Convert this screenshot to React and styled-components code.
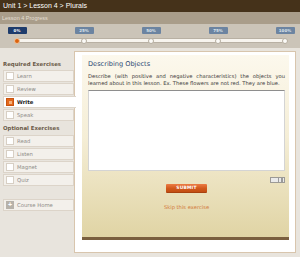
import React from 'react'
import styled, { createGlobalStyle } from 'styled-components'

const GlobalStyle = createGlobalStyle`
  html, body {
    margin: 0;
    padding: 0;
  }
  body {
    width: 300px;
    height: 257px;
    overflow: hidden;
    background: #e8e4dd;
    font-family: 'DejaVu Sans', Verdana, sans-serif;
  }
`

const Page = styled.div`
  display: flex;
  flex-direction: column;
  width: 300px;
  height: 257px;
`

const TopBar = styled.div`
  height: 12px;
  padding-left: 3px;
  background: #45321a;
  color: #fff;
  font: 7px/12px 'Liberation Sans', Arial, sans-serif;
`

const ProgressTitle = styled.div`
  height: 12px;
  padding-left: 2px;
  background: #a99d8a;
  color: #e4ddd1;
  font: 5.5px/12px 'Liberation Sans', Arial, sans-serif;
`

const ProgressArea = styled.div`
  height: 24px;
  box-sizing: border-box;
  padding: 3px 3px 0 5px;
  background: #cbc4b8;
`

const Stops = styled.div`
  display: flex;
  justify-content: space-between;
`

const Stop = styled.div`
  width: 24px;
  display: flex;
  justify-content: center;
`

const Badge = styled.span`
  width: 19px;
  height: 7px;
  border-radius: 1px;
  background: ${p => (p.$active ? '#1e3c6c' : '#6c84a1')};
  color: ${p => (p.$active ? '#fff' : '#dde4ec')};
  font: bold 4px/7px 'DejaVu Sans', Verdana, sans-serif;
  text-align: center;
`

const Track = styled.div`
  margin: 4px 12px 0;
  height: 3px;
  border: 1px solid #b8b0a3;
  border-radius: 3px;
  background: #f7f4ee;
  display: flex;
  justify-content: space-between;
  align-items: center;
`

const Dot = styled.span`
  width: 6px;
  height: 6px;
  box-sizing: border-box;
  border-radius: 50%;
  background: ${p => (p.$active ? '#db620e' : '#fbfaf7')};
  border: 1px solid ${p => (p.$active ? '#f0c49c' : '#b5ad9f')};
  &:first-child { margin-left: -4px; }
  &:last-child { margin-right: -4px; }
`

const Body = styled.div`
  flex: 1;
  min-height: 0;
  display: flex;
  padding: 3px 4px 4px 0;
`

const Sidebar = styled.nav`
  width: 74px;
  flex: none;
  box-sizing: border-box;
  padding: 7px 0 0 3px;
  display: flex;
  flex-direction: column;
`

const SectionTitle = styled.div`
  height: 12px;
  margin-bottom: ${p => (p.$gap ? '1px' : '0')};
  color: #6a5a47;
  font: bold 5.4px/12px 'DejaVu Sans', Verdana, sans-serif;
`

const Item = styled.div`
  position: relative;
  z-index: ${p => (p.$active ? 1 : 0)};
  height: 12px;
  box-sizing: border-box;
  margin: ${p => (p.$top ? '12px' : '0')} ${p => (p.$active ? '-2px' : '0')} 1px 0;
  padding-left: 2px;
  display: flex;
  align-items: center;
  gap: 3px;
  border: 1px solid #dcd4c9;
  border-right: ${p => (p.$active ? 'none' : '1px solid #dcd4c9')};
  background: ${p => (p.$active ? '#fff' : '#f3f0eb')};
  color: ${p => (p.$active ? '#222' : '#8e8b87')};
  font-size: 5.3px;
  font-weight: ${p => (p.$active ? 'bold' : 'normal')};
`

const Check = styled.span`
  width: 8px;
  height: 8px;
  box-sizing: border-box;
  flex: none;
  display: flex;
  align-items: center;
  justify-content: center;
  border: 1px solid ${p => (p.$active ? '#c9540f' : '#d7cfc4')};
  background: ${p => (p.$active ? '#e2671b' : '#fff')};
  &::after {
    content: '';
    display: ${p => (p.$active ? 'block' : 'none')};
    width: 3px;
    height: 3px;
    background: #f6b079;
  }
`

const HomeIcon = styled.span`
  width: 8px;
  height: 8px;
  flex: none;
  background: #b7b2aa;
  color: #fff;
  font: bold 7px/8px 'Liberation Sans', Arial, sans-serif;
  text-align: center;
`

const Panel = styled.main`
  flex: 1;
  display: flex;
  padding: 3px 6px 12px 7px;
  border: 1px solid #d8c5ad;
  background: #fff;
`

const Exercise = styled.section`
  flex: 1;
  display: flex;
  flex-direction: column;
  padding: 4px 4px 0 6px;
  border-bottom: 3px solid #7a5f3e;
  background: linear-gradient(#fcf8ed, #f5eed6 45%, #e0d4a4);
`

const Title = styled.h2`
  margin: 0;
  color: #2d4a74;
  font: 6.6px/10px 'DejaVu Sans', Verdana, sans-serif;
`

const Prompt = styled.p`
  margin: 4px 0 0;
  color: #3a3a3a;
  font-size: 5.2px;
  line-height: 7px;
  text-align: justify;
  text-align-last: left;
`

const Answer = styled.textarea`
  display: block;
  margin-top: 3px;
  height: 81px;
  box-sizing: border-box;
  border: 1px solid #d4d4d4;
  border-top-color: #8e8e8e;
  background: #fff;
  resize: none;
  outline: none;
`

const Grip = styled.span`
  align-self: flex-end;
  margin-top: 6px;
  width: 13px;
  height: 4px;
  border: 1px solid #9c9a96;
  background: linear-gradient(90deg, #eaeaea 0 55%, #9a9a9a 55% 65%, #eaeaea 65% 80%, #9a9a9a 80% 90%, #eaeaea 90%);
`

const Submit = styled.button`
  align-self: center;
  margin-top: 1px;
  width: 41px;
  height: 9px;
  padding: 0;
  border: none;
  border-bottom: 1px solid #a8410f;
  border-radius: 1px;
  background: linear-gradient(#ec7c45, #d2591c 55%, #c24d13);
  color: #fff;
  font: bold 4.4px/8px 'DejaVu Sans', Verdana, sans-serif;
  letter-spacing: 0.2px;
`

const Skip = styled.a`
  align-self: center;
  margin-top: 10px;
  color: #d27a3c;
  font-size: 5.2px;
  line-height: 8px;
  text-decoration: none;
`

const stops = ['0%', '25%', '50%', '75%', '100%']
const required = ['Learn', 'Review', 'Write', 'Speak']
const optional = ['Read', 'Listen', 'Magnet', 'Quiz']

export default function App() {
  return (
    <>
      <GlobalStyle />
      <Page>
        <TopBar>Unit 1 &gt; Lesson 4 &gt; Plurals</TopBar>
        <ProgressTitle>Lesson 4 Progress</ProgressTitle>
        <ProgressArea>
          <Stops>
            {stops.map((s, i) => (
              <Stop key={s}>
                <Badge $active={i === 0}>{s}</Badge>
              </Stop>
            ))}
          </Stops>
          <Track>
            {stops.map((s, i) => (
              <Dot key={s} $active={i === 0} />
            ))}
          </Track>
        </ProgressArea>
        <Body>
          <Sidebar>
            <SectionTitle>Required Exercises</SectionTitle>
            {required.map(name => (
              <Item key={name} $active={name === 'Write'}>
                <Check $active={name === 'Write'} />
                {name}
              </Item>
            ))}
            <SectionTitle $gap>Optional Exercises</SectionTitle>
            {optional.map(name => (
              <Item key={name}>
                <Check />
                {name}
              </Item>
            ))}
            <Item $top>
              <HomeIcon>+</HomeIcon>
              Course Home
            </Item>
          </Sidebar>
          <Panel>
            <Exercise>
              <Title>Describing Objects</Title>
              <Prompt>
                Describe (with positive and negative characteristics) the objects you
                learned about in this lesson. Ex. These flowers are not red. They are blue.
              </Prompt>
              <Answer />
              <Grip />
              <Submit>SUBMIT</Submit>
              <Skip href="#">Skip this exercise</Skip>
            </Exercise>
          </Panel>
        </Body>
      </Page>
    </>
  )
}
